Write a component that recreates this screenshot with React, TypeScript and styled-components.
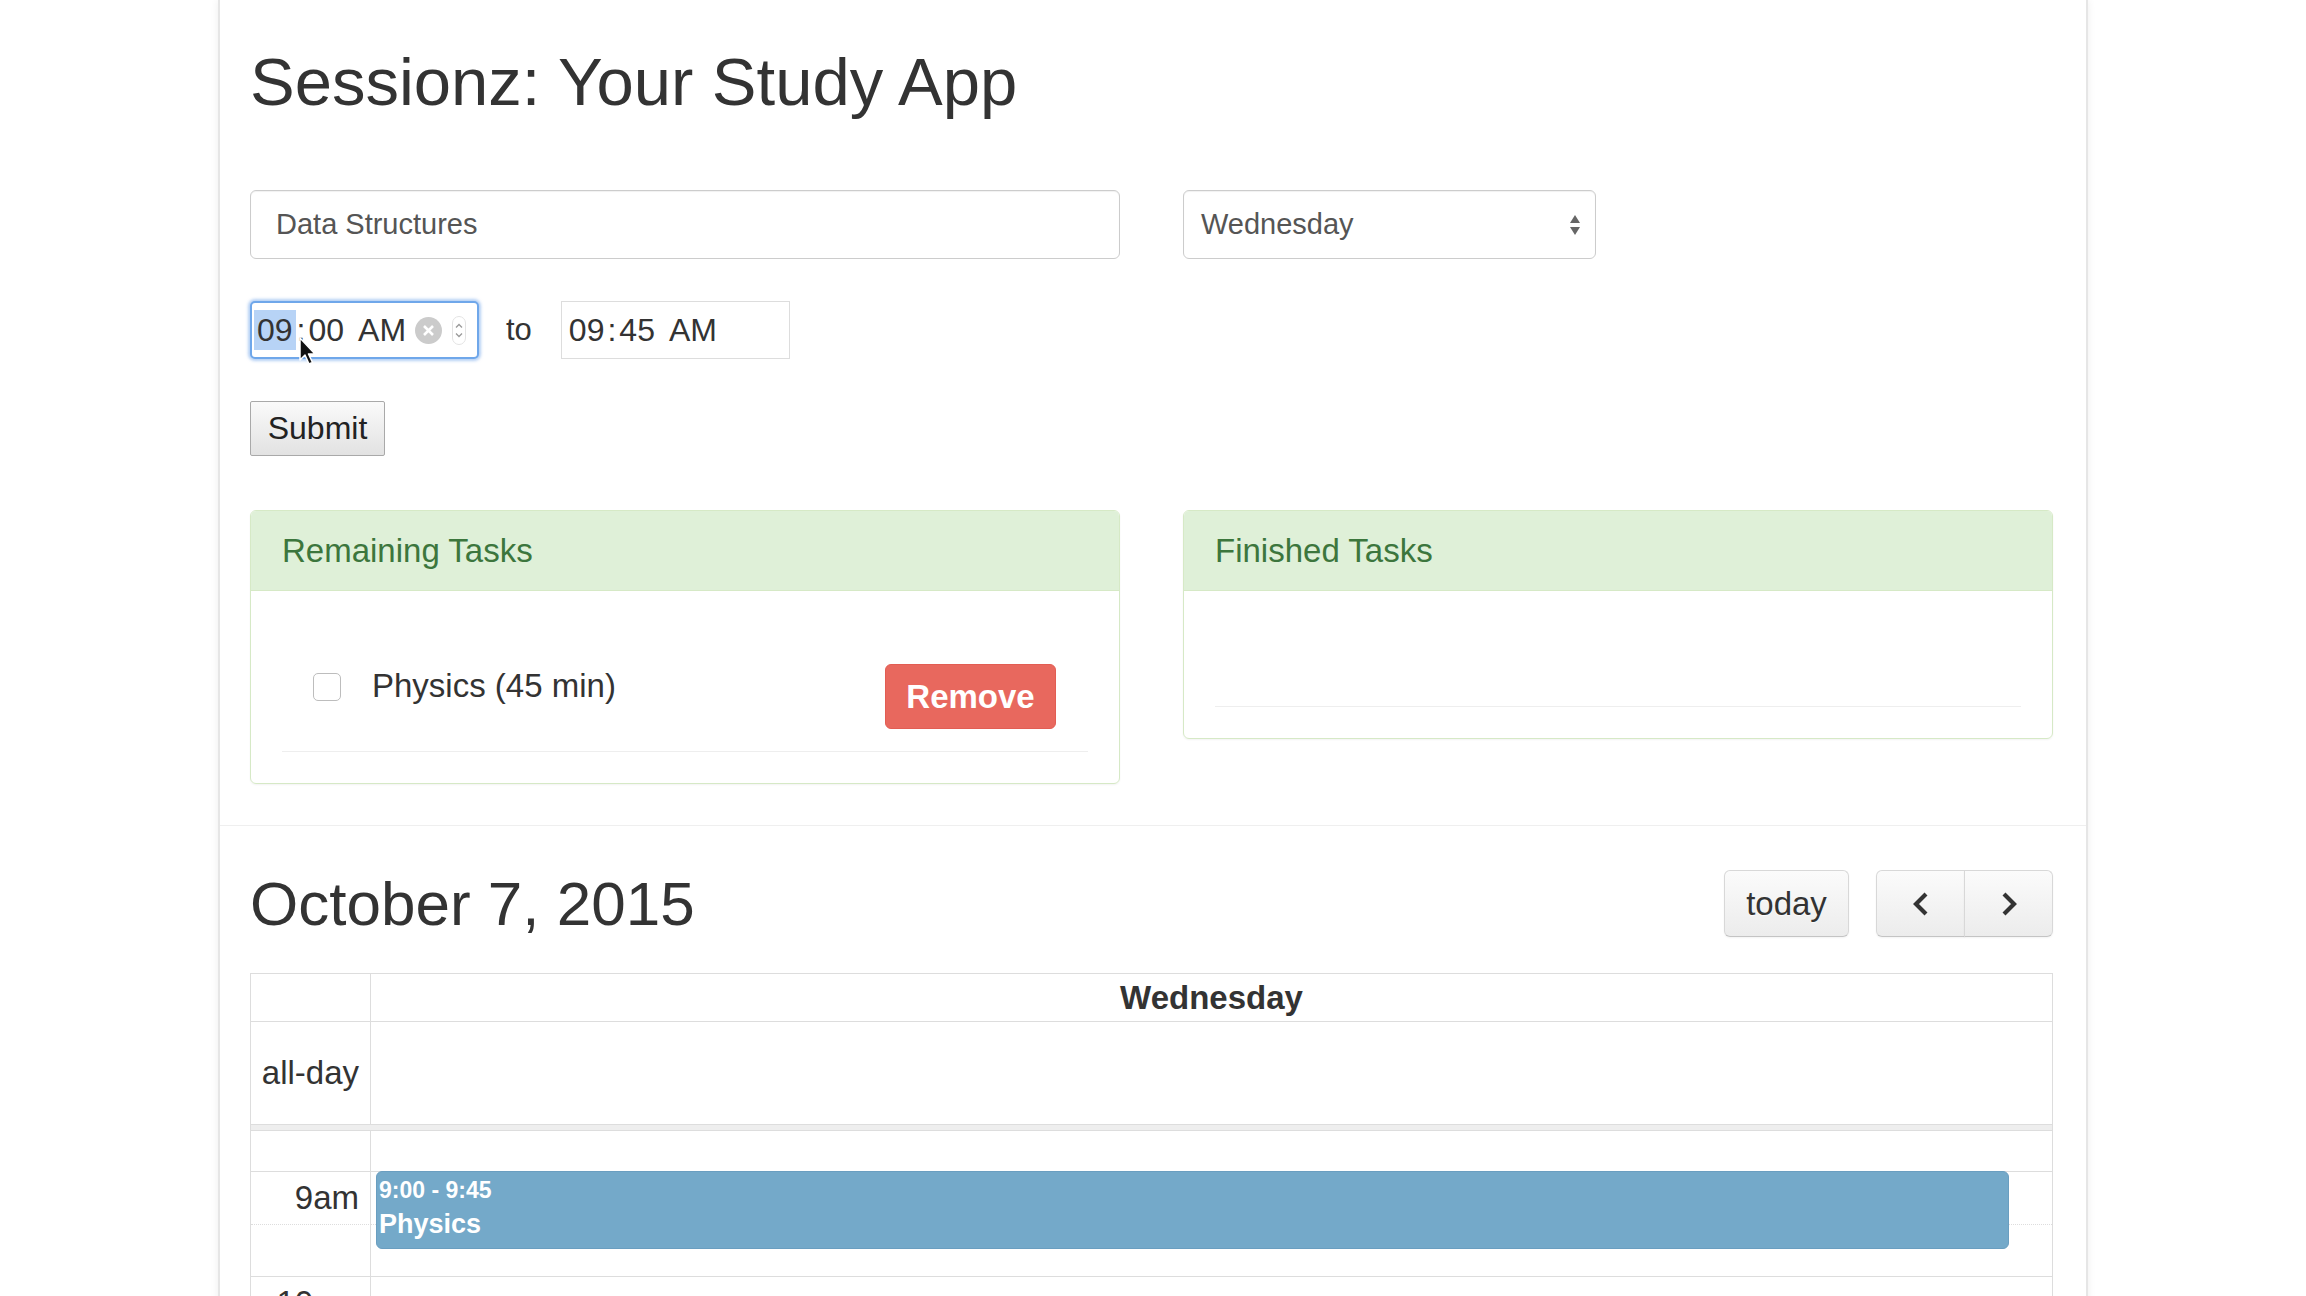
import React from "react";
import styled, { createGlobalStyle } from "styled-components";

const GlobalStyle = createGlobalStyle`
  html, body {
    margin: 0;
    padding: 0;
    background: #fff;
  }
  body {
    font-family: "Liberation Sans", Arial, sans-serif;
    color: #333;
    overflow: hidden;
  }
  * {
    box-sizing: border-box;
  }
`;

const Page = styled.div`
  height: 1296px;
  overflow: hidden;
  background: #fff;
`;

const Shell = styled.div`
  width: 1870px;
  min-height: 1296px;
  margin: 0 auto;
  padding: 45px 33px 0 30px;
  border-left: 2px solid #e6e6e6;
  border-right: 2px solid #e6e6e6;
  box-shadow: 0 0 8px rgba(0, 0, 0, 0.07);
`;

const Title = styled.h1`
  margin: 0;
  font-size: 67px;
  line-height: 73px;
  font-weight: 400;
  color: #333;
`;

const TwoCols = styled.div<{ $top: number }>`
  display: grid;
  grid-template-columns: 870px 870px;
  column-gap: 63px;
  align-items: start;
  margin-top: ${(p) => p.$top}px;
`;

const TextBox = styled.div`
  height: 69px;
  border: 1px solid #ccc;
  border-radius: 6px;
  padding: 0 25px;
  display: flex;
  align-items: center;
  font-size: 29px;
  color: #555;
  box-shadow: inset 0 1px 1px rgba(0, 0, 0, 0.06);
`;

const SelectBox = styled(TextBox)`
  width: 413px;
  padding: 0 14px 0 17px;
  justify-content: space-between;
`;

const TimeRow = styled.div`
  display: flex;
  align-items: center;
  margin-top: 42px;
`;

const TimeField = styled.div<{ $focused?: boolean }>`
  position: relative;
  width: 229px;
  height: 58px;
  display: flex;
  align-items: center;
  padding-left: ${(p) => (p.$focused ? "2px" : "5px")};
  font-size: 32px;
  color: #333;
  background: #fff;
  border: ${(p) => (p.$focused ? "2px solid #6fa7ea" : "1px solid #ddd")};
  border-radius: ${(p) => (p.$focused ? "5px" : "0")};
  box-shadow: ${(p) => (p.$focused ? "0 0 3px 2px rgba(120, 170, 235, 0.55)" : "none")};
`;

const Seg = styled.span<{ $selected?: boolean }>`
  display: inline-block;
  padding: 0 ${(p) => (p.$selected ? "3px" : "2px")};
  line-height: 40px;
  background: ${(p) => (p.$selected ? "#b7d3f6" : "transparent")};
`;

const Colon = styled.span`
  display: inline-block;
  padding: 0 1px;
`;

const Gap = styled.span`
  display: inline-block;
  width: 10px;
`;

const ClearIcon = styled.svg`
  margin-left: 7px;
  flex: none;
`;

const SpinIcon = styled.svg`
  margin-left: 10px;
  flex: none;
`;

const Cursor = styled.svg`
  position: absolute;
  left: 47px;
  top: 34px;
  pointer-events: none;
`;

const ToLabel = styled.span`
  font-size: 31px;
  margin: 0 29px 0 27px;
  color: #333;
`;

const SubmitButton = styled.button`
  display: block;
  margin-top: 42px;
  width: 135px;
  height: 55px;
  padding: 0;
  font-family: inherit;
  font-size: 32px;
  color: #222;
  background: linear-gradient(#fafafa, #e2e2e2);
  border: 1px solid #a9a9a9;
  border-radius: 2px;
`;

const Panel = styled.div`
  border: 1px solid #d6e9c6;
  border-radius: 6px;
  overflow: hidden;
  box-shadow: 0 1px 2px rgba(0, 0, 0, 0.05);
`;

const PanelHeading = styled.div`
  height: 80px;
  padding: 0 31px;
  display: flex;
  align-items: center;
  background: #dff0d8;
  border-bottom: 1px solid #d6e9c6;
  color: #3c763d;
  font-size: 33px;
`;

const PanelBody = styled.div`
  padding: 31px;
`;

const TaskItem = styled.div<{ $empty?: boolean }>`
  display: flex;
  align-items: flex-start;
  min-height: ${(p) => (p.$empty ? "85px" : "0")};
  padding: ${(p) => (p.$empty ? "0" : "42px 32px 22px 31px")};
  border-bottom: 1px solid #eee;
`;

const Check = styled.span`
  flex: none;
  width: 28px;
  height: 28px;
  margin-top: 9px;
  border: 1px solid #bdbdbd;
  border-radius: 5px;
  background: #fff;
`;

const TaskLabel = styled.span`
  margin-left: 31px;
  font-size: 33px;
  line-height: 44px;
  color: #333;
`;

const RemoveButton = styled.button`
  margin-left: auto;
  width: 171px;
  height: 65px;
  padding: 0;
  border: 1px solid #e25d53;
  border-radius: 6px;
  background: #e8685e;
  color: #fff;
  font-family: inherit;
  font-weight: 700;
  font-size: 33px;
`;

const Rule = styled.div`
  margin: 41px -33px 0 -30px;
  border-top: 1px solid #efefef;
`;

const Toolbar = styled.div`
  display: flex;
  justify-content: space-between;
  align-items: flex-start;
  margin-top: 44px;
`;

const DateTitle = styled.h2`
  margin: 0;
  font-size: 62px;
  line-height: 67px;
  font-weight: 400;
  color: #333;
`;

const ToolButtons = styled.div`
  display: flex;
`;

const ToolButton = styled.button<{ $pos: "single" | "left" | "right"; $w: number }>`
  width: ${(p) => p.$w}px;
  height: 67px;
  padding: 0;
  display: flex;
  align-items: center;
  justify-content: center;
  font-family: inherit;
  font-size: 33px;
  color: #333;
  text-shadow: 0 1px 1px rgba(255, 255, 255, 0.75);
  background: linear-gradient(#fbfbfb, #ececec);
  border: 1px solid #d8d8d8;
  border-bottom-color: #c4c4c4;
  box-shadow: inset 0 1px 0 rgba(255, 255, 255, 0.2), 0 1px 2px rgba(0, 0, 0, 0.05);
  border-radius: ${(p) =>
    p.$pos === "single" ? "6px" : p.$pos === "left" ? "6px 0 0 6px" : "0 6px 6px 0"};
  margin-right: ${(p) => (p.$pos === "single" ? "27px" : "0")};
  margin-left: ${(p) => (p.$pos === "right" ? "-1px" : "0")};
`;

const Calendar = styled.div`
  margin-top: 36px;
  border: 1px solid #ddd;
  display: grid;
  grid-template-columns: 120px 1fr;
`;

const HeadCell = styled.div<{ $axis?: boolean }>`
  height: 48px;
  border-bottom: 1px solid #ddd;
  border-right: ${(p) => (p.$axis ? "1px solid #ddd" : "none")};
  display: flex;
  align-items: center;
  justify-content: center;
  font-weight: 700;
  font-size: 33px;
  color: #333;
`;

const AxisLabel = styled.div<{ $h: number; $line?: "solid" | "dotted" | "none" }>`
  height: ${(p) => p.$h}px;
  border-right: 1px solid #ddd;
  border-top: ${(p) =>
    p.$line === "solid" ? "1px solid #ddd" : p.$line === "dotted" ? "1px dotted #ddd" : "none"};
  display: flex;
  align-items: center;
  justify-content: flex-end;
  padding-right: 11px;
  font-size: 33px;
  color: #333;
  white-space: nowrap;
`;

const Lane = styled.div<{ $h: number; $line?: "solid" | "dotted" | "none" }>`
  height: ${(p) => p.$h}px;
  border-top: ${(p) =>
    p.$line === "solid" ? "1px solid #ddd" : p.$line === "dotted" ? "1px dotted #ddd" : "none"};
`;

const DividerBar = styled.div`
  grid-column: 1 / -1;
  height: 7px;
  background: #eee;
  border-top: 1px solid #ddd;
  border-bottom: 1px solid #ddd;
`;

const Slots = styled.div`
  grid-column: 1 / -1;
  position: relative;
  display: grid;
  grid-template-columns: 120px 1fr;
`;

const Event = styled.div`
  position: absolute;
  top: 40px;
  left: 125px;
  right: 43px;
  height: 78px;
  padding: 3px 2px;
  background: #74a9c9;
  border: 1px solid #6a9ec0;
  border-radius: 6px;
  color: #fff;
  font-weight: 700;
`;

const EventTime = styled.div`
  font-size: 23px;
  line-height: 30px;
`;

const EventTitle = styled.div`
  font-size: 27px;
  line-height: 38px;
`;

const slotRows: { label: string; h: number; line: "solid" | "dotted" | "none" }[] = [
  { label: "", h: 40, line: "none" },
  { label: "9am", h: 53, line: "solid" },
  { label: "", h: 52, line: "dotted" },
  { label: "10am", h: 52, line: "solid" },
  { label: "", h: 52, line: "dotted" },
];

const App: React.FC = () => {
  return (
    <Page>
      <GlobalStyle />
      <Shell>
        <Title>Sessionz: Your Study App</Title>

        <TwoCols $top={72}>
          <TextBox>Data Structures</TextBox>
          <SelectBox>
            <span>Wednesday</span>
            <svg width="12" height="24" viewBox="0 0 12 24">
              <path d="M6 2 L11 10 L1 10 Z" fill="#666" />
              <path d="M1 14 L11 14 L6 22 Z" fill="#666" />
            </svg>
          </SelectBox>
        </TwoCols>

        <TimeRow>
          <TimeField $focused>
            <Seg $selected>09</Seg>
            <Colon>:</Colon>
            <Seg>00</Seg>
            <Gap />
            <Seg>AM</Seg>
            <ClearIcon width="27" height="27" viewBox="0 0 27 27">
              <circle cx="13.5" cy="13.5" r="13.5" fill="#cbcbcb" />
              <path d="M9 9 L18 18 M18 9 L9 18" stroke="#fff" strokeWidth="2.6" />
            </ClearIcon>
            <SpinIcon width="14" height="29" viewBox="0 0 14 29">
              <rect x="0.5" y="0.5" width="13" height="28" rx="6.5" fill="#fff" stroke="#e3e3e3" />
              <path d="M4 11.5 L7 8.5 L10 11.5 M4 17.5 L7 20.5 L10 17.5" stroke="#9a9a9a" strokeWidth="1.3" fill="none" />
            </SpinIcon>
            <Cursor width="20" height="30" viewBox="0 0 20 30">
              <path d="M1 1 L1 23 L6 18 L10 27 L13.5 25.5 L9.5 17 L16 17 Z" fill="#111" stroke="#fff" strokeWidth="1.5" strokeLinejoin="round" />
            </Cursor>
          </TimeField>
          <ToLabel>to</ToLabel>
          <TimeField>
            <Seg>09</Seg>
            <Colon>:</Colon>
            <Seg>45</Seg>
            <Gap />
            <Seg>AM</Seg>
          </TimeField>
        </TimeRow>

        <SubmitButton>Submit</SubmitButton>

        <TwoCols $top={54}>
          <Panel>
            <PanelHeading>Remaining Tasks</PanelHeading>
            <PanelBody>
              <TaskItem>
                <Check />
                <TaskLabel>Physics (45 min)</TaskLabel>
                <RemoveButton>Remove</RemoveButton>
              </TaskItem>
            </PanelBody>
          </Panel>
          <Panel>
            <PanelHeading>Finished Tasks</PanelHeading>
            <PanelBody>
              <TaskItem $empty />
            </PanelBody>
          </Panel>
        </TwoCols>

        <Rule />

        <Toolbar>
          <DateTitle>October 7, 2015</DateTitle>
          <ToolButtons>
            <ToolButton $pos="single" $w={125}>today</ToolButton>
            <ToolButton $pos="left" $w={89}>
              <svg width="20" height="28" viewBox="0 0 20 28">
                <path d="M15 4 L5 14 L15 24" stroke="#333" strokeWidth="4.2" fill="none" />
              </svg>
            </ToolButton>
            <ToolButton $pos="right" $w={89}>
              <svg width="20" height="28" viewBox="0 0 20 28">
                <path d="M5 4 L15 14 L5 24" stroke="#333" strokeWidth="4.2" fill="none" />
              </svg>
            </ToolButton>
          </ToolButtons>
        </Toolbar>

        <Calendar>
          <HeadCell $axis />
          <HeadCell>Wednesday</HeadCell>
          <AxisLabel $h={102}>all-day</AxisLabel>
          <Lane $h={102} />
          <DividerBar />
          <Slots>
            {slotRows.map((row, i) => (
              <React.Fragment key={i}>
                <AxisLabel $h={row.h} $line={row.line}>
                  {row.label}
                </AxisLabel>
                <Lane $h={row.h} $line={row.line} />
              </React.Fragment>
            ))}
            <Event>
              <EventTime>9:00 - 9:45</EventTime>
              <EventTitle>Physics</EventTitle>
            </Event>
          </Slots>
        </Calendar>
      </Shell>
    </Page>
  );
};

export default App;
